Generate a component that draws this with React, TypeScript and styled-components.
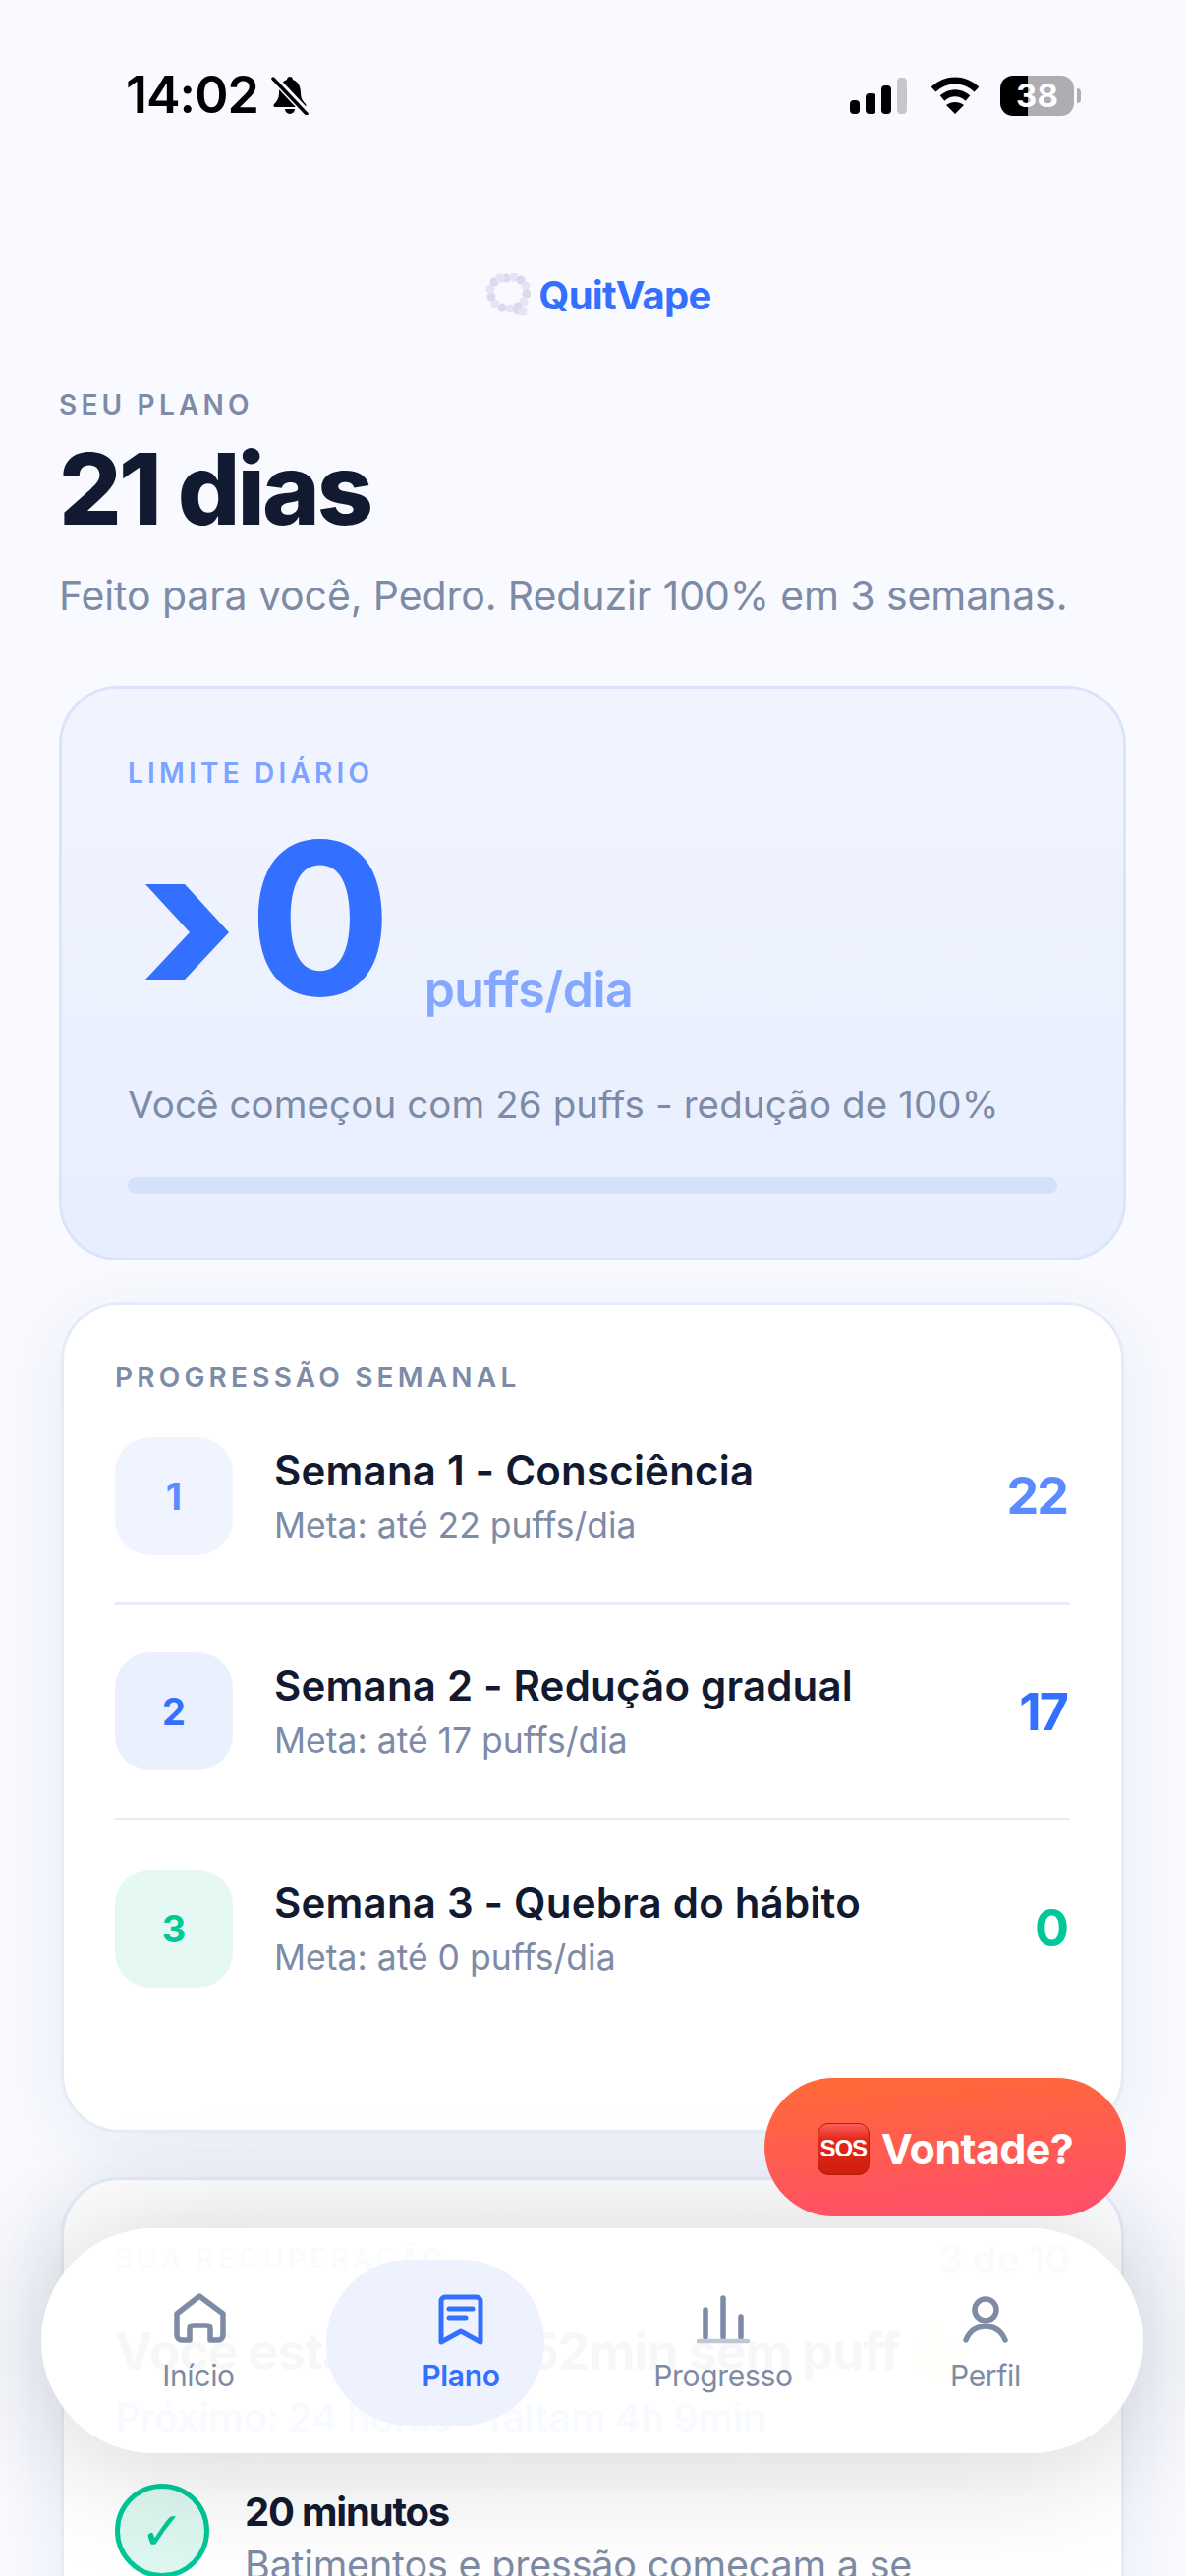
import React from 'react'
import styled, { createGlobalStyle } from 'styled-components'

const GlobalStyle = createGlobalStyle`
  html, body {
    margin: 0;
    padding: 0;
    background: #f8faff;
  }
  * {
    box-sizing: border-box;
  }
`

const Page = styled.div`
  position: relative;
  width: 1206px;
  height: 2622px;
  overflow: hidden;
  background: #f8faff;
  font-family: Inter, 'Noto Sans', sans-serif;
  color: #111a30;
`

const StatusBar = styled.div`
  display: flex;
  justify-content: space-between;
  align-items: center;
  height: 42px;
  margin-top: 76px;
  padding: 0 113px 0 128px;
`

const StatusLeft = styled.div`
  display: flex;
  align-items: center;
  gap: 13px;
`

const Time = styled.span`
  font-size: 52px;
  font-weight: 600;
  letter-spacing: -1px;
  line-height: 42px;
  color: #000;
`

const StatusRight = styled.div`
  display: flex;
  align-items: center;
  gap: 21px;
`

const SignalIcon = styled.svg`
  margin-right: 3px;
`

const Battery = styled.div`
  position: relative;
  display: flex;
  align-items: center;
  justify-content: center;
  width: 75px;
  height: 41px;
  border-radius: 13px;
  background: linear-gradient(90deg, #000 38%, #aeaeb2 38%);
  color: #fff;
  font-size: 33px;
  font-weight: 700;
  &::after {
    content: '';
    position: absolute;
    right: -7px;
    top: 13px;
    width: 4px;
    height: 15px;
    border-radius: 0 4px 4px 0;
    background: #aeaeb2;
  }
`

const Logo = styled.div`
  display: flex;
  justify-content: center;
  align-items: center;
  gap: 8px;
  margin-top: 160px;
  padding-left: 12px;
  height: 44px;
`

const LogoText = styled.span`
  font-size: 40px;
  font-weight: 700;
  letter-spacing: -0.7px;
  color: #3370ff;
`

const Header = styled.header`
  padding: 0 60px;
  margin-top: 74px;
`

const Eyebrow = styled.div<{ $color?: string }>`
  font-size: 28px;
  line-height: 32px;
  font-weight: 600;
  letter-spacing: 4.2px;
  color: ${(p) => p.$color || '#7d8ba6'};
  text-transform: uppercase;
`

const Title = styled.h1`
  margin: 15px 0 0;
  font-size: 100px;
  line-height: 110px;
  font-weight: 800;
  letter-spacing: -3px;
  color: #111a30;
`

const Subtitle = styled.p`
  margin: 28px 0 0;
  font-size: 41px;
  line-height: 50px;
  letter-spacing: -0.1px;
  color: #7d8ba6;
`

const HeroCard = styled.section`
  margin: 67px 60px 0;
  height: 585px;
  padding: 70px 67px 0;
  border: 3px solid #dae5fc;
  border-radius: 60px;
  background: linear-gradient(180deg, #f2f5ff 0%, #e7eefe 100%);
`

const LimitRow = styled.div`
  display: flex;
  align-items: flex-end;
  height: 220px;
  margin-top: 22px;
`

const Chevron = styled.svg`
  width: 85px;
  height: 97px;
  margin: 0 0 48px 18px;
  flex: none;
`

const LimitValue = styled.span`
  font-size: 216px;
  line-height: 220px;
  font-weight: 700;
  letter-spacing: -4px;
  color: #3370ff;
  margin: 0 0 0 20px;
`

const LimitUnit = styled.span`
  font-size: 50px;
  line-height: 56px;
  font-weight: 600;
  letter-spacing: -0.5px;
  color: #84a8ff;
  margin: 0 0 10px 37px;
`

const HeroNote = styled.p`
  margin: 56px 0 0;
  font-size: 38.5px;
  line-height: 46px;
  letter-spacing: 0.1px;
  color: #7d8ba6;
`

const Track = styled.div`
  height: 17px;
  margin-top: 51px;
  border-radius: 9px;
  background: #d5e0fa;
`

const Card = styled.section`
  margin: 0 62px;
  border: 3px solid #e5ecf8;
  border-radius: 60px;
  background: #fff;
  box-shadow: 0 14px 70px rgba(40, 60, 110, 0.07);
`

const WeekCard = styled(Card)`
  margin-top: 42px;
  height: 846px;
  padding: 58px 52px 0;
`

const WeekList = styled.div`
  margin-top: 44px;
`

const WeekRow = styled.div`
  display: flex;
  align-items: center;
  height: 219px;
  padding-bottom: 48px;
  border-bottom: 3px solid #e6edf9;
  &:first-child {
    height: 172px;
  }
  & + & {
    padding-top: 48px;
    height: 219px;
  }
  &:last-child {
    border-bottom: 0;
  }
`

const WeekBadge = styled.div<{ $bg: string; $color: string }>`
  display: flex;
  align-items: center;
  justify-content: center;
  flex: none;
  width: 120px;
  height: 120px;
  border-radius: 36px;
  background: ${(p) => p.$bg};
  color: ${(p) => p.$color};
  font-size: 38px;
  font-weight: 700;
`

const WeekText = styled.div`
  flex: 1;
  margin-left: 42px;
`

const WeekTitle = styled.div`
  font-size: 42px;
  line-height: 50px;
  font-weight: 600;
  letter-spacing: 0.2px;
  color: #111a30;
`

const WeekMeta = styled.div`
  margin-top: 10px;
  font-size: 35.5px;
  line-height: 42px;
  color: #7d8ba6;
`

const WeekGoal = styled.div<{ $color: string }>`
  margin-right: 3px;
  font-size: 52px;
  font-weight: 700;
  letter-spacing: -2px;
  color: ${(p) => p.$color};
`

const RecoveryCard = styled(Card)`
  margin-top: 45px;
  height: 600px;
  padding: 64px 52px 0;
`

const RecoveryHead = styled.div`
  display: flex;
  justify-content: space-between;
  align-items: center;
  height: 32px;
`

const RecoveryCount = styled.span`
  font-size: 40px;
  font-weight: 600;
  letter-spacing: -0.5px;
  color: #7d8ba6;
`

const RecoveryTitle = styled.div`
  display: flex;
  align-items: center;
  gap: 14px;
  margin-top: 46px;
  font-size: 52px;
  line-height: 66px;
  font-weight: 700;
  letter-spacing: -1.2px;
  white-space: nowrap;
`

const RecoveryNext = styled.div`
  margin-top: 12px;
  font-size: 40px;
  line-height: 44px;
  font-weight: 600;
  letter-spacing: -0.5px;
  color: #3370ff;
`

const Milestone = styled.div`
  display: flex;
  gap: 36px;
  margin-top: 45px;
`

const CheckCircle = styled.div`
  display: flex;
  align-items: center;
  justify-content: center;
  flex: none;
  width: 96px;
  height: 96px;
  border: 5px solid #00c896;
  border-radius: 50%;
  background: rgba(0, 200, 150, 0.13);
  color: #00c896;
  font-family: 'DejaVu Sans', sans-serif;
  font-size: 54px;
  font-weight: 700;
`

const MilestoneTitle = styled.div`
  font-size: 40px;
  line-height: 46px;
  font-weight: 700;
  letter-spacing: -1.2px;
  margin-top: 6px;
`

const MilestoneText = styled.div`
  margin-top: 8px;
  font-size: 39.5px;
  line-height: 46px;
  letter-spacing: -0.2px;
  color: #7d8ba6;
  white-space: nowrap;
`

const SosButton = styled.button`
  position: absolute;
  left: 778px;
  top: 2115px;
  display: flex;
  align-items: center;
  justify-content: center;
  gap: 12px;
  width: 368px;
  height: 141px;
  padding: 3px 0 0;
  border: 0;
  border-radius: 71px;
  background: linear-gradient(175deg, #ff6b35 0%, #ff4d6d 100%);
  color: #fff;
  font-family: Inter, sans-serif;
  font-size: 43px;
  font-weight: 700;
  letter-spacing: -0.6px;
  z-index: 3;
`

const SosGlyph = styled.span`
  display: flex;
  align-items: center;
  justify-content: center;
  width: 53px;
  height: 53px;
  border-radius: 11px;
  border: 1px solid #b71c0c;
  background: linear-gradient(180deg, #f9625a 0%, #e5281a 30%, #cd1f0e 100%);
  color: #fff;
  font-family: 'Liberation Sans', sans-serif;
  font-size: 24px;
  font-weight: 700;
  letter-spacing: -1px;
`

const Nav = styled.nav`
  position: absolute;
  left: 42px;
  top: 2268px;
  display: grid;
  grid-template-columns: repeat(4, 267px);
  align-items: center;
  justify-content: center;
  width: 1121px;
  height: 229px;
  border-radius: 115px;
  background: rgba(255, 255, 255, 0.965);
  box-shadow: 0 6px 130px rgba(20, 25, 40, 0.2);
  z-index: 2;
`

// the highlight sits a little left of the active tab, as in the app
const NavIndicator = styled.div`
  position: absolute;
  left: 290px;
  top: 32px;
  width: 222px;
  height: 169px;
  border-radius: 84px;
  background: #eef2ff;
`

const NavItem = styled.div<{ $active?: boolean }>`
  position: relative;
  display: flex;
  flex-direction: column;
  align-items: center;
  justify-self: center;
  width: 222px;
  height: 169px;
  padding-top: 33px;
  color: ${(p) => (p.$active ? '#3370ff' : '#7d8ba6')};
`

const NavLabel = styled.span<{ $active?: boolean }>`
  margin-top: 9px;
  font-size: 30px;
  line-height: 36px;
  font-weight: ${(p) => (p.$active ? 600 : 400)};
  letter-spacing: -0.3px;
`

const NavIcon = styled.svg`
  width: 60px;
  height: 60px;
  fill: none;
  stroke: currentColor;
  stroke-linecap: round;
  stroke-linejoin: round;
`

const puffs = [
  [21, 5], [29, 4], [36, 7], [41, 13], [42, 21], [39, 29], [33, 34], [25, 36],
  [17, 35], [10, 31], [6, 24], [5, 16], [9, 9], [15, 5], [33, 38], [38, 39],
]

const LogoMark = () => (
  <svg width="46" height="44" viewBox="0 0 46 44">
    {puffs.map(([x, y], i) => (
      <circle key={i} cx={x} cy={y} r="4.6" fill={i % 2 ? '#e6e3f4' : '#dcd9ee'} />
    ))}
  </svg>
)

const BellOff = () => (
  <svg width="38" height="40" viewBox="0 0 38 40">
    <path
      fill="#000"
      d="M19 1c-2 0-3 1.500-3 3C10 6 8 12 8 18c0 5-2 8-5 11-1 1-.5 3 1 3h30c1.500 0 2-2 1-3-3-3-5-6-5-11 0-6-2-12-8-14 0-1.500-1-3-3-3zM14 34a5 5 0 0 0 10 0z"
    />
    <path d="M4 4l32 34" stroke="#f8faff" strokeWidth="8" />
    <path d="M2 3l34 36" stroke="#000" strokeWidth="3.500" strokeLinecap="round" />
  </svg>
)

const Signal = () => (
  <SignalIcon width="58" height="37" viewBox="0 0 58 37">
    <rect x="0" y="23" width="10" height="14" rx="4" fill="#000" />
    <rect x="16" y="16" width="10" height="21" rx="4" fill="#000" />
    <rect x="32" y="8" width="10" height="29" rx="4" fill="#000" />
    <rect x="48" y="0" width="10" height="37" rx="4" fill="#c6c7cb" />
  </SignalIcon>
)

const Wifi = () => (
  <svg width="50" height="38" viewBox="0 0 50 38" fill="none">
    <path d="M3 13C16 1 34 1 47 13" stroke="#000" strokeWidth="7" />
    <path d="M12 22C20 15 30 15 38 22" stroke="#000" strokeWidth="7" />
    <path d="M25 38L16 29C21 25 29 25 34 29Z" fill="#000" />
  </svg>
)

const HomeIcon = () => (
  <NavIcon viewBox="0 0 60 60" strokeWidth="5.500">
    <path d="M8 24L31 6L55 24V46a5 5 0 0 1-5 5H42V39a3 3 0 0 0-3-3H24a3 3 0 0 0-3 3V51H13a5 5 0 0 1-5-5Z" />
  </NavIcon>
)

const PlanIcon = () => (
  <NavIcon viewBox="0 0 60 60" strokeWidth="5">
    <path d="M10 11a4 4 0 0 1 4-4H46a4 4 0 0 1 4 4V53L30 42L10 53Z" />
    <path d="M18 19H42M18 28H35" />
  </NavIcon>
)

const ProgressIcon = () => (
  <NavIcon viewBox="0 0 60 60" strokeWidth="5.500">
    <path d="M12 20V48M30 8V48M48 27V48" />
    <path d="M5 52H55" stroke="#bfc8d6" strokeWidth="4.500" />
  </NavIcon>
)

const ProfileIcon = () => (
  <NavIcon viewBox="0 0 60 60" strokeWidth="5.500">
    <circle cx="30" cy="20" r="11" />
    <path d="M10 51C14 41 22 37 30 37C38 37 46 41 50 51" />
  </NavIcon>
)

const weeks = [
  { n: 1, title: 'Semana 1 - Consciência', meta: 'Meta: até 22 puffs/dia', goal: '22', bg: '#f0f4ff', color: '#5b8cff' },
  { n: 2, title: 'Semana 2 - Redução gradual', meta: 'Meta: até 17 puffs/dia', goal: '17', bg: '#ebf0ff', color: '#3370ff' },
  { n: 3, title: 'Semana 3 - Quebra do hábito', meta: 'Meta: até 0 puffs/dia', goal: '0', bg: '#e6f8f3', color: '#00c896' },
]

const App = () => {
  return (
    <Page>
      <GlobalStyle />
      <StatusBar>
        <StatusLeft>
          <Time>14:02</Time>
          <BellOff />
        </StatusLeft>
        <StatusRight>
          <Signal />
          <Wifi />
          <Battery>38</Battery>
        </StatusRight>
      </StatusBar>

      <Logo>
        <LogoMark />
        <LogoText>QuitVape</LogoText>
      </Logo>

      <Header>
        <Eyebrow>Seu plano</Eyebrow>
        <Title>21 dias</Title>
        <Subtitle>Feito para você, Pedro. Reduzir 100% em 3 semanas.</Subtitle>
      </Header>

      <HeroCard>
        <Eyebrow $color="#7ba3ff">Limite diário</Eyebrow>
        <LimitRow>
          <Chevron viewBox="0 0 85 97">
            <path d="M0 0H40L85 49L40 97H0L45 49Z" fill="#3370ff" />
          </Chevron>
          <LimitValue>0</LimitValue>
          <LimitUnit>puffs/dia</LimitUnit>
        </LimitRow>
        <HeroNote>Você começou com 26 puffs - redução de 100%</HeroNote>
        <Track />
      </HeroCard>

      <WeekCard>
        <Eyebrow>Progressão semanal</Eyebrow>
        <WeekList>
          {weeks.map((w) => (
            <WeekRow key={w.n}>
              <WeekBadge $bg={w.bg} $color={w.color}>
                {w.n}
              </WeekBadge>
              <WeekText>
                <WeekTitle>{w.title}</WeekTitle>
                <WeekMeta>{w.meta}</WeekMeta>
              </WeekText>
              <WeekGoal $color={w.color}>{w.goal}</WeekGoal>
            </WeekRow>
          ))}
        </WeekList>
      </WeekCard>

      <RecoveryCard>
        <RecoveryHead>
          <Eyebrow>Sua recuperação</Eyebrow>
          <RecoveryCount>3 de 10</RecoveryCount>
        </RecoveryHead>
        <RecoveryTitle>
          Você está há 19h 52min sem puff
          <svg width="56" height="64" viewBox="0 0 56 64">
            <path d="M16 2c6-2 14 0 14 5l-6 6 2 14c8-6 22-6 26 6 3 10-2 22-14 24-14 2-30-2-34-8C2 36 6 14 16 2z" fill="#f7d58a" />
          </svg>
        </RecoveryTitle>
        <RecoveryNext>Próximo: 24 horas - faltam 4h 9min</RecoveryNext>
        <Milestone>
          <CheckCircle>✓</CheckCircle>
          <div>
            <MilestoneTitle>20 minutos</MilestoneTitle>
            <MilestoneText>Batimentos e pressão começam a se</MilestoneText>
          </div>
        </Milestone>
      </RecoveryCard>

      <SosButton>
        <SosGlyph>SOS</SosGlyph>
        Vontade?
      </SosButton>

      <Nav>
        <NavIndicator />
        <NavItem>
          <HomeIcon />
          <NavLabel>Início</NavLabel>
        </NavItem>
        <NavItem $active>
          <PlanIcon />
          <NavLabel $active>Plano</NavLabel>
        </NavItem>
        <NavItem>
          <ProgressIcon />
          <NavLabel>Progresso</NavLabel>
        </NavItem>
        <NavItem>
          <ProfileIcon />
          <NavLabel>Perfil</NavLabel>
        </NavItem>
      </Nav>
    </Page>
  )
}

export default App
